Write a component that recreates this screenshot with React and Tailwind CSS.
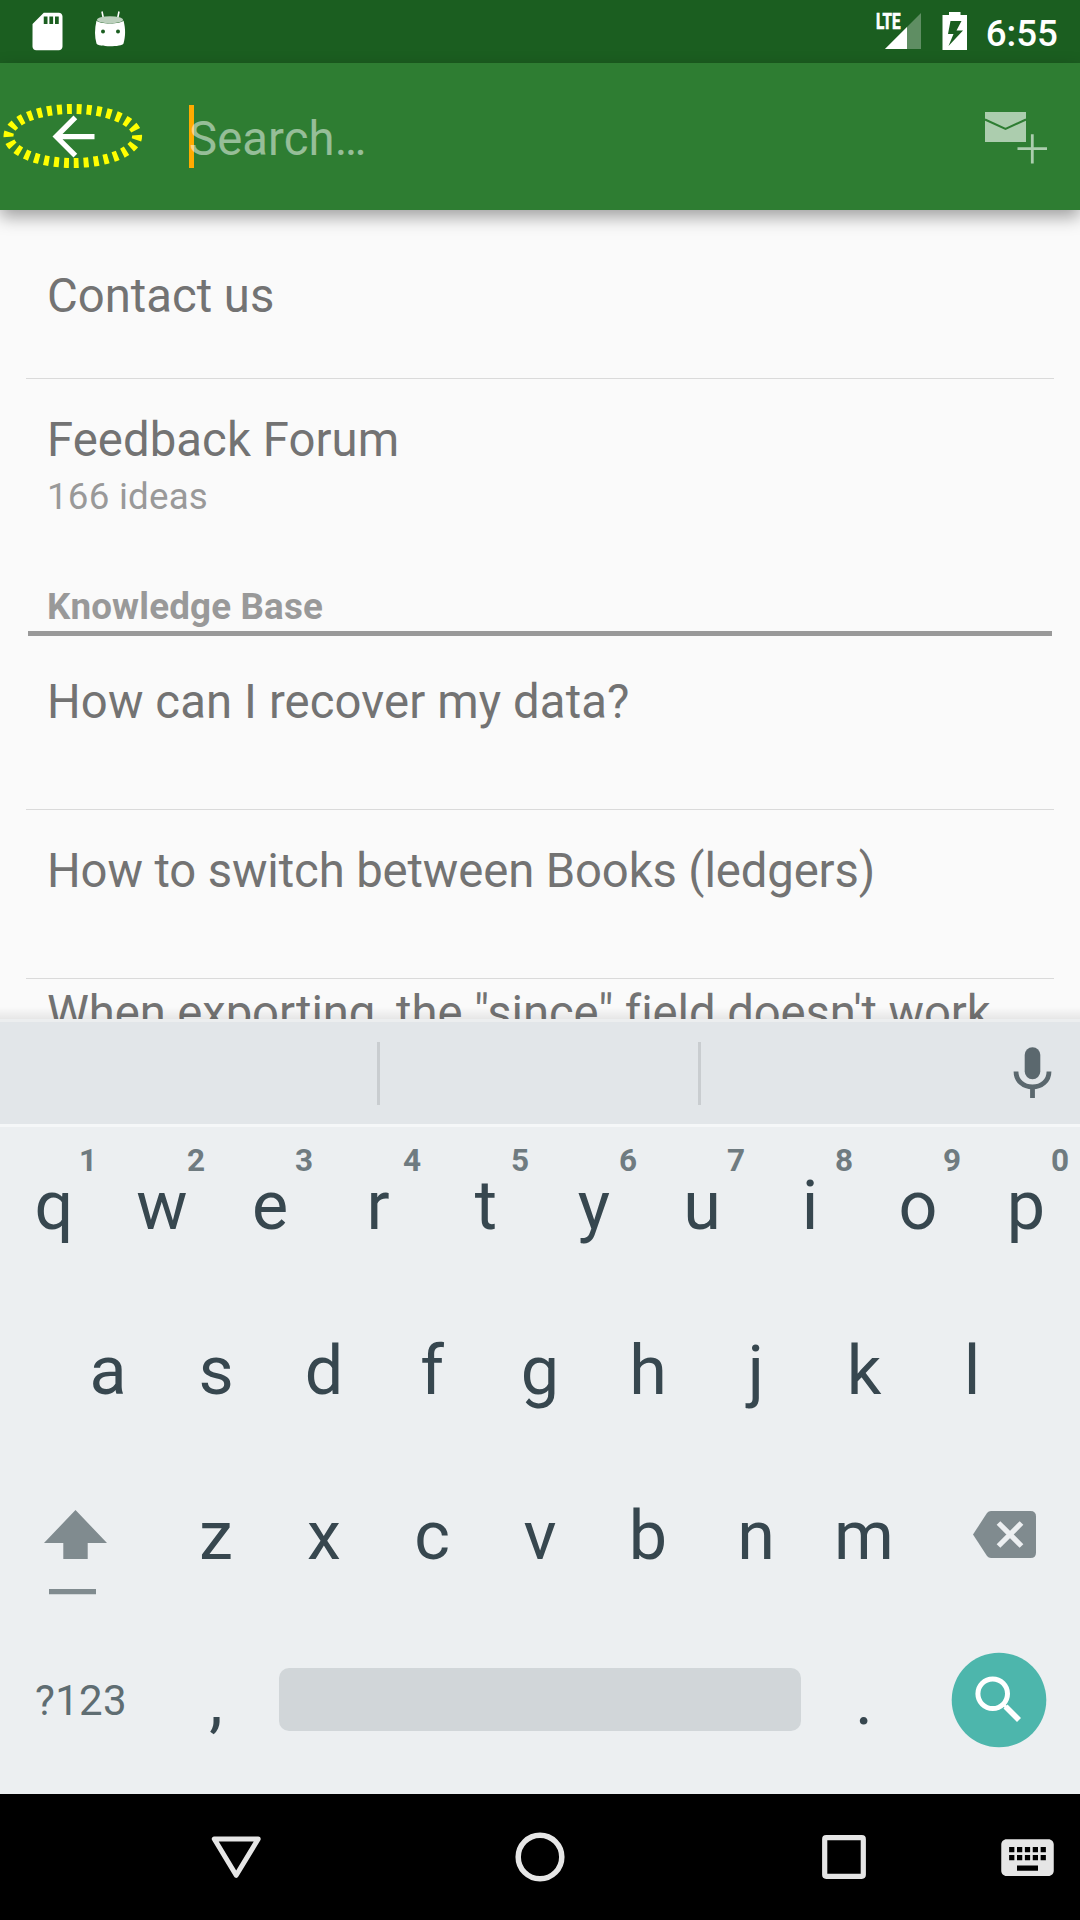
import React from "react";

const KEY_ROW_ONE = ["q", "w", "e", "r", "t", "y", "u", "i", "o", "p"];
const KEY_ROW_TWO = ["a", "s", "d", "f", "g", "h", "j", "k", "l"];
const KEY_ROW_THREE = ["z", "x", "c", "v", "b", "n", "m"];

function StatusBar() {
  return (
    <header className="flex h-[63px] items-start bg-[#1b5e20]">
      <svg className="ml-[25px] mt-[9px] size-[45px]" viewBox="0 0 24 24" fill="#fff">
        <path d="M18 2h-8L4.02 8 4 20c0 1.1.9 2 2 2h12c1.1 0 2-.9 2-2V4c0-1.1-.9-2-2-2zm-6 6h-2V4h2v4zm3 0h-2V4h2v4zm3 0h-2V4h2v4z" />
      </svg>
      <svg className="ml-[23px] mt-[10px] h-[38px] w-[34px]" viewBox="0 0 34 38">
        <path d="M9 1.500L10.500 9M26 1.500L24.500 9" stroke="#fff" strokeWidth="1.600" />
        <path d="M3.500 10.500C6 14.500 28 14.500 30.500 10.500C32.800 19 32.500 27 30.500 33.500C29 37.200 5 37.200 3.500 33.500C1.500 27 1.500 19 3.500 10.500Z" fill="#fff" />
        <ellipse cx="17" cy="9.800" rx="13" ry="3.600" fill="#bcd0bd" />
        <circle cx="10" cy="21.500" r="2" fill="#1b5e20" />
        <circle cx="25" cy="21.500" r="2" fill="#1b5e20" />
      </svg>
      <div className="flex-1" />
      <svg className="mt-[10px] h-[42px] w-[48px]" viewBox="0 0 48 42">
        <path d="M45 3V39H9Z" fill="#5f8e63" />
        <path d="M31 17V39H9Z" fill="#fff" />
        <text x="0" y="19" fill="#fff" stroke="#fff" strokeWidth="0.700" fontFamily="Roboto" fontWeight="700" fontSize="21.500" textLength="24.500" lengthAdjust="spacingAndGlyphs">LTE</text>
      </svg>
      <svg className="ml-[18px] mt-[12px] h-[38px] w-[26px]" viewBox="0 0 26 38">
        <path d="M7 0H18.500V3H25V38H0.500V3H7ZM8.500 9L6 22H11.500L6.500 34L21 18.500H14.500L19.500 9Z" fill="#fff" fillRule="evenodd" />
      </svg>
      <span className="ml-[18px] mr-[22px] mt-[12px] text-[36.75px] font-medium leading-[44px] text-white">6:55</span>
    </header>
  );
}

function SearchBar() {
  return (
    <div className="relative z-10 flex h-[147px] items-start bg-[#2e7d32] shadow-[0_7px_16px_rgba(0,0,0,0.36)]">
      <div className="relative ml-[42px] mt-[42px] size-[63px]">
        <svg className="size-[63px]" viewBox="0 0 24 24" fill="#fff">
          <path d="M20 11H7.830l5.590-5.590L12 4l-8 8 8 8 1.410-1.410L7.830 13H20v-2z" />
        </svg>
        <svg className="absolute -left-[42px] -top-[5px] h-[72px] w-[150px]" viewBox="0 0 150 72">
          <ellipse cx="72.800" cy="36" rx="64.300" ry="27" fill="none" stroke="#ff0" strokeWidth="10" pathLength="300" strokeDasharray="5 5" strokeDashoffset="1" />
        </svg>
      </div>
      <div className="ml-[84px] mt-[42px] h-[63px] w-[5px] bg-[#ffab00]" />
      <span className="-ml-[5px] mt-[48px] flex-1 text-[47.25px] leading-[56px] tracking-[0.1px] text-white/50 z-10">Search…</span>
      <svg className="mr-[32px] mt-[47px] h-[56px] w-[64px]" viewBox="0 0 64 56">
        <path d="M1 2H42V32H1Z" fill="#accdae" />
        <path d="M1 9.500L21.500 19L42 9.500" fill="none" stroke="#2e7d32" strokeWidth="2" />
        <path d="M33.500 38.600H63M48.300 24.200V53.500" stroke="#accdae" strokeWidth="2.800" />
      </svg>
    </div>
  );
}

function Row({ children, className }) {
  return <p className={`ml-[21px] whitespace-nowrap text-[47.25px] leading-[56px] text-[#737373] ${className}`}>{children}</p>;
}

function Results() {
  return (
    <main className="flex h-[809px] flex-col overflow-hidden bg-[#fafafa] px-[26px]">
      <div className="h-[169px] shrink-0 border-b border-[#dadada]">
        <Row className="mt-[58px]">Contact us</Row>
      </div>
      <div className="h-[205px] shrink-0">
        <Row className="mt-[33px] tracking-[0.08px]">Feedback Forum</Row>
        <p className="ml-[21px] mt-[7px] text-[36.75px] leading-[44px] tracking-[0.2px] text-[#999]">166 ideas</p>
      </div>
      <div className="mx-[2px] h-[52px] shrink-0 border-b-[5px] border-[#999]">
        <h2 className="ml-[19px] pt-px text-[36.75px] font-bold leading-[44px] tracking-[0.17px] text-[#999]">Knowledge Base</h2>
      </div>
      <div className="h-[174px] shrink-0 border-b border-[#dadada]">
        <Row className="mt-[38px] tracking-[0.12px]">How can I recover my data?</Row>
      </div>
      <div className="h-[169px] shrink-0 border-b border-[#dadada]">
        <Row className="mt-[33px] tracking-[-0.12px]">How to switch between Books (ledgers)</Row>
      </div>
      <div className="h-[168px] shrink-0">
        <Row className="mt-[6px] tracking-[-0.09px]">When exporting, the "since" field doesn't work</Row>
      </div>
    </main>
  );
}

function SuggestionStrip() {
  return (
    <div className="relative flex h-[108px] items-start border-y-[3px] border-b-[#f5f7f8] border-t-[#eceeef] bg-[#e2e6e9]">
      <div className="absolute inset-x-0 -top-[15px] h-[12px] bg-linear-to-b from-transparent to-black/8" />
      <div className="ml-[377px] mt-[20px] h-[63px] w-[3px] bg-[#c9cdd0]" />
      <div className="ml-[318px] mt-[20px] h-[63px] w-[3px] bg-[#c9cdd0]" />
      <div className="flex-1" />
      <svg className="mr-[28px] mt-[24px] h-[53px] w-[39px]" viewBox="0 0 39 53">
        <rect x="11.700" y="1.300" width="15.600" height="32" rx="7.800" fill="#5b686e" />
        <path d="M3 25.500C3 35 10.500 41 19.500 41S36 35 36 25.500M19.500 41V52" fill="none" stroke="#5b686e" strokeWidth="4.800" />
      </svg>
    </div>
  );
}

function Key({ label, hint }) {
  return (
    <div className="relative w-[108px] text-center text-[68.25px] leading-[159px] text-[#37474f]">
      {label}
      {hint && <span className="absolute left-[79px] top-[14px] text-[31.5px] font-bold leading-[40px] text-[#6f7b80]">{hint}</span>}
    </div>
  );
}

function Keyboard() {
  return (
    <section className="flex h-[667px] flex-col bg-[#eceff1]">
      <div className="flex h-[165px]">
        {KEY_ROW_ONE.map((k, i) => (
          <Key key={k} label={k} hint={String((i + 1) % 10)} />
        ))}
      </div>
      <div className="flex h-[165px] justify-center">
        {KEY_ROW_TWO.map((k) => (
          <Key key={k} label={k} />
        ))}
      </div>
      <div className="flex h-[165px] justify-between">
        <svg className="ml-[43px] mt-[52px] h-[87px] w-[66px]" viewBox="0 0 66 87" fill="#808b8f">
          <path d="M32.500 1L64 34H44.700V50H20.300V34H1Z" />
          <path d="M6 80H53V85.300H6Z" />
        </svg>
        <div className="ml-[53px] flex flex-1">
          {KEY_ROW_THREE.map((k) => (
            <Key key={k} label={k} />
          ))}
        </div>
        <svg className="mr-[43px] mt-[53px] h-[49px] w-[65px]" viewBox="0 0 65 49">
          <path d="M19 1H58.500Q64 1 64 6.500V42.500Q64 48 58.500 48H19Q16.500 48 15 46L1 24.500L15 3Q16.500 1 19 1Z" fill="#808b8f" />
          <path d="M26.500 13L49.500 36M49.500 13L26.500 36" stroke="#eceff1" strokeWidth="5.200" />
        </svg>
      </div>
      <div className="flex h-[172px]">
        <span className="ml-[35px] mt-[51px] w-[127px] text-[42px] leading-[56px] tracking-[0.3px] text-[#5f6d72]">?123</span>
        <Key label="," />
        <div className="ml-[9px] mt-[46px] h-[63px] w-[522px] rounded-[10px] bg-[#d1d6d9]" />
        <div className="ml-[9px]">
          <Key label="." />
        </div>
        <svg className="ml-[33px] mt-[30px] size-[96px]" viewBox="0 0 96 96">
          <circle cx="48" cy="48" r="47.300" fill="#4db6ac" />
          <circle cx="41.700" cy="41.700" r="14.800" fill="none" stroke="#fff" strokeWidth="5" />
          <path d="M52 52L55 55" stroke="#fff" strokeWidth="3" />
          <path d="M54.500 54.500L68 68" stroke="#fff" strokeWidth="5.600" />
        </svg>
      </div>
    </section>
  );
}

function NavigationBar() {
  return (
    <nav className="flex h-[126px] items-center bg-black">
      <svg className="ml-[210px] size-[52px]" viewBox="0 0 52 52">
        <path d="M4.300 8H48.200L26.200 44.300Z" fill="none" stroke="#e6e6e6" strokeWidth="5" strokeLinejoin="round" />
      </svg>
      <svg className="ml-[252px] size-[52px]" viewBox="0 0 52 52">
        <circle cx="26" cy="26" r="21.800" fill="none" stroke="#e6e6e6" strokeWidth="5.500" />
      </svg>
      <svg className="ml-[252px] size-[52px]" viewBox="0 0 52 52">
        <rect x="6.700" y="6.700" width="38.600" height="38.600" rx="1.500" fill="none" stroke="#e6e6e6" strokeWidth="5.200" />
      </svg>
      <svg className="ml-[126px] size-[63px]" viewBox="0 0 24 24" fill="#e6e6e6">
        <path d="M20 5H4c-1.100 0-1.990.9-1.990 2L2 17c0 1.100.9 2 2 2h16c1.100 0 2-.9 2-2V7c0-1.100-.9-2-2-2zm-9 3h2v2h-2V8zm0 3h2v2h-2v-2zM8 8h2v2H8V8zm0 3h2v2H8v-2zm-1 2H5v-2h2v2zm0-3H5V8h2v2zm9 7H8v-2h8v2zm0-4h-2v-2h2v2zm0-3h-2V8h2v2zm3 3h-2v-2h2v2zm0-3h-2V8h2v2z" />
      </svg>
    </nav>
  );
}

export default function App() {
  return (
    <div className="flex h-[1920px] w-[1080px] flex-col overflow-hidden font-['Roboto',sans-serif]">
      <StatusBar />
      <SearchBar />
      <Results />
      <SuggestionStrip />
      <Keyboard />
      <NavigationBar />
    </div>
  );
}
